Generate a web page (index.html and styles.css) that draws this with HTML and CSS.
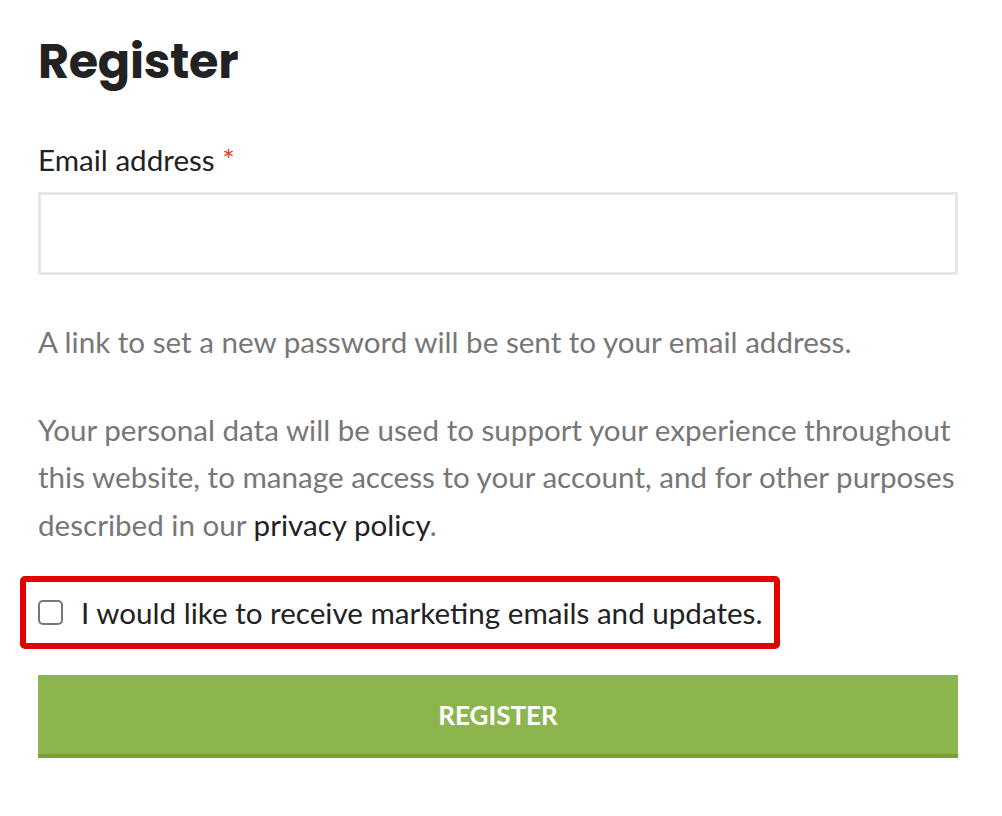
FILE: index.html
```html
<!DOCTYPE html>
<html lang="en">
<head>
    <meta charset="UTF-8">
    <meta name="viewport" content="width=device-width, initial-scale=1.0">
    <title>Register</title>
    <link rel="stylesheet" href="styles.css">
</head>
<body>

    <div class="register-wrap">
        <h2 class="title">Register</h2>

        <form class="register-form" onsubmit="return false">
            <!-- Email field -->
            <p class="form-row">
                <label for="reg-email" class="field-label">Email address <span class="required">*</span></label>
                <input type="email" id="reg-email" class="input-text">
            </p>

            <p class="note">A link to set a new password will be sent to your email address.</p>

            <p class="note privacy">Your personal data will be used to support your experience throughout this website, to manage access to your account, and for other purposes described in our <a href="#" class="privacy-link">privacy policy</a>.</p>

            <!-- Marketing opt-in (highlighted) -->
            <label class="optin">
                <input type="checkbox" class="optin-check">
                <span>I would like to receive marketing emails and updates.</span>
            </label>

            <button type="submit" class="register-button">Register</button>
        </form>
    </div>

</body>
</html>
```

FILE: styles.css
```css
body, html {
    margin: 0;
    padding: 0;
    background: #fff;
}

body {
    font-family: Lato, "Liberation Sans", sans-serif;
    color: #222;
}

.register-wrap {
    width: 920px;
    padding: 30px 0 0 38px;
}

.title {
    margin: 0 0 48px;
    font-family: Poppins, Inter, "Liberation Sans", sans-serif;
    font-size: 47.7px;
    font-weight: 700;
    line-height: 64px;
    letter-spacing: -0.3px;
    color: #222;
}

.form-row {
    margin: 0 0 43px;
}

.field-label {
    display: block;
    font-size: 29.6px;
    line-height: 36px;
    margin-bottom: 14px;
}

.required {
    color: #e2401c;
}

.input-text {
    display: block;
    box-sizing: border-box;
    width: 100%;
    height: 83px;
    border: 3px solid #e6e6e6;
    background: #fff;
    font-size: 27px;
    padding: 0 18px;
    outline: none;
}

/* grey helper text */
.note {
    margin: 0 0 40px;
    font-size: 29.6px;
    line-height: 47.5px;
    color: #777;
}

.note.privacy {
    margin-bottom: 28px;
}

.privacy-link {
    color: #222;
    text-decoration: none;
}

/* opt-in row with the red highlight box */
.optin {
    display: inline-flex;
    align-items: center;
    gap: 18px;
    margin-left: -18px;
    padding: 10px 12px;
    border: 6px solid #e30000;
    border-radius: 5px;
    font-size: 29.6px;
    line-height: 41px;
    color: #222;
    cursor: pointer;
}

.optin-check {
    width: 25px;
    height: 25px;
    margin: 0;
    appearance: none;
    border: 2px solid #767676;
    border-radius: 5px;
    background: #fff;
}

.register-button {
    display: block;
    width: 100%;
    height: 83px;
    margin-top: 26px;
    border: none;
    border-bottom: 4px solid #76a03b;
    background-color: #8db54d;
    color: #fff;
    font-family: Lato, "Liberation Sans", sans-serif;
    font-size: 26px;
    font-weight: 700;
    text-transform: uppercase;
    cursor: pointer;
}
```
